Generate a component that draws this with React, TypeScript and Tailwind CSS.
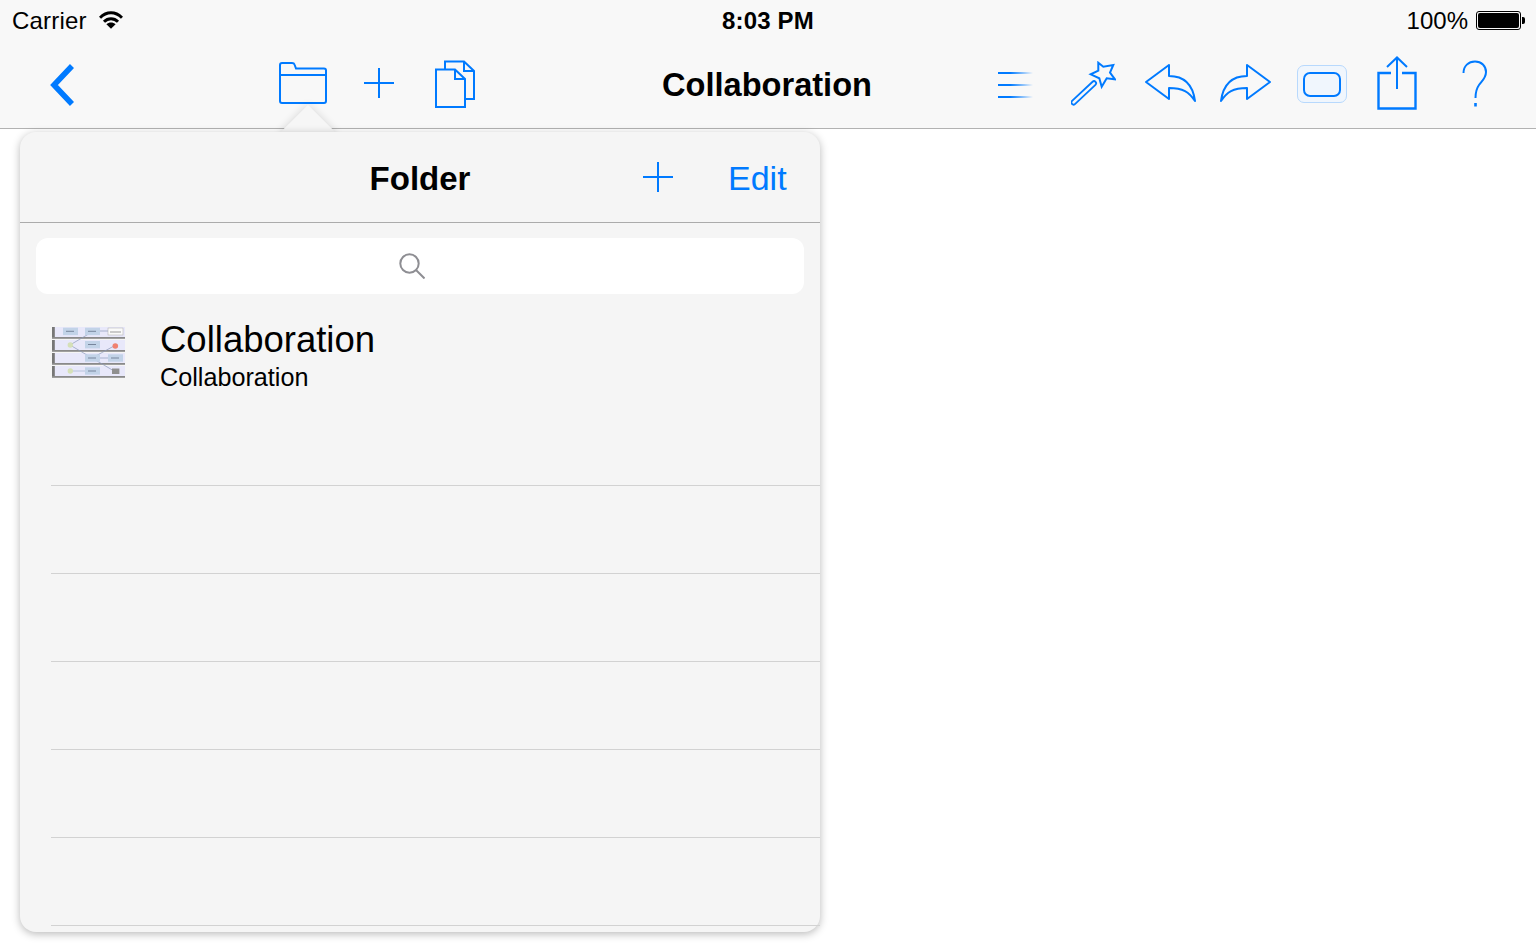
import React from 'react';

const BLUE = '#007aff';

function Line({ d, w = 2 }: { d: string; w?: number }) {
  return <path d={d} fill="none" stroke={BLUE} strokeWidth={w} />;
}

function Wifi() {
  return (
    <svg width="24" height="18" viewBox="0 0 24 18" className="ml-[12px] -mt-[2px]">
      <path d="M1 6.8C7.5 0.2 16.5 0.2 23 6.8" fill="none" stroke="#000" strokeWidth="3" />
      <path d="M5 10.8C9 6.8 15 6.8 19 10.8" fill="none" stroke="#000" strokeWidth="3" />
      <path d="M12 17.8L7.4 13.2C10 11 14 11 16.6 13.2Z" fill="#000" />
    </svg>
  );
}

function Battery() {
  return (
    <div className="ml-[8px] -mt-[2px] flex items-center">
      <div className="h-[19px] w-[45px] rounded-[3px] border border-black p-[1px]">
        <div className="h-full w-full rounded-[2px] bg-black" />
      </div>
      <div className="ml-[1px] h-[7px] w-[3px] rounded-r-[2px] bg-black" />
    </div>
  );
}

function Back() {
  return (
    <svg width="24" height="42" viewBox="0 0 24 42" className="ml-[50px] mt-[24px] shrink-0">
      <polyline points="22,2 4,21 22,40" fill="none" stroke={BLUE} strokeWidth="5.6" />
    </svg>
  );
}

function Folder() {
  return (
    <svg width="48" height="42" viewBox="0 0 48 42" className="ml-[205px] mt-[22px] shrink-0">
      <Line d="M1 13V3Q1 1 3 1H13Q15 1 15.5 2.5L17 6.5H45Q47 6.5 47 8.5V39Q47 41 45 41H3Q1 41 1 39Z" />
      <Line d="M1 13H47" />
    </svg>
  );
}

function Plus({ className }: { className: string }) {
  return (
    <svg width="30" height="30" viewBox="0 0 30 30" className={className}>
      <Line d="M0 15H30M15 0V30" />
    </svg>
  );
}

function Docs() {
  return (
    <svg width="40" height="48" viewBox="0 0 40 48" className="ml-[41px] mt-[20px] shrink-0">
      <Line d="M1 9.5H20L30 19V47H1Z" />
      <Line d="M20 9.5V19H30" />
      <Line d="M10 9V1.5H29L39 11V39H31" />
      <Line d="M29 1.5V11H39" />
    </svg>
  );
}

function Lines() {
  return (
    <svg width="35" height="26" viewBox="0 0 35 26" className="ml-[124px] mt-[32px] shrink-0">
      <defs>
        <linearGradient id="fade" x1="0" y1="0" x2="35" y2="0" gradientUnits="userSpaceOnUse">
          <stop offset="0.35" stopColor={BLUE} />
          <stop offset="1" stopColor={BLUE} stopOpacity="0" />
        </linearGradient>
      </defs>
      <rect x="0" y="0" width="35" height="2" fill="url(#fade)" />
      <rect x="0" y="12" width="35" height="2" fill="url(#fade)" />
      <rect x="0" y="24" width="35" height="2" fill="url(#fade)" />
    </svg>
  );
}

function Wand() {
  return (
    <svg width="45" height="45" viewBox="0 0 45 45" className="ml-[38px] mt-[21px] shrink-0">
      <path d="M27.3 1.7L32.3 5.7L42.3 4L39 11.7L44 18.3L35.7 17.3L30.7 25.7L28.3 17.3L19.7 13.3L27.3 9.7Z" fill="none" stroke={BLUE} strokeWidth="2" />
      <line x1="2.5" y1="41.5" x2="23" y2="22.3" stroke={BLUE} strokeWidth="6" strokeLinecap="round" />
      <line x1="2.5" y1="41.5" x2="23" y2="22.3" stroke="#f8f8f8" strokeWidth="2.4" strokeLinecap="round" />
    </svg>
  );
}

const ARROW = 'M1 18L24 1V12C40 12 48 22 50 37C44 28 38 24 24 24V35Z';

function Reply() {
  return (
    <svg width="51" height="38" viewBox="0 0 51 38" className="ml-[29px] mt-[24px] shrink-0">
      <path d={ARROW} fill="none" stroke={BLUE} strokeWidth="2" strokeLinejoin="round" />
    </svg>
  );
}

function Forward() {
  return (
    <svg width="51" height="38" viewBox="0 0 51 38" className="ml-[24px] mt-[24px] shrink-0">
      <path d={ARROW} transform="translate(51 0) scale(-1 1)" fill="none" stroke={BLUE} strokeWidth="2" strokeLinejoin="round" />
    </svg>
  );
}

function Frame() {
  return (
    <div className="ml-[26px] mt-[25px] flex h-[38px] w-[50px] shrink-0 items-center justify-center rounded-[7px] border border-[#b8d9fd] bg-[#f0f6fd]">
      <div className="h-[25px] w-[38px] rounded-[7px] border-2 border-[#007aff]" />
    </div>
  );
}

function Share() {
  return (
    <svg width="40" height="54" viewBox="0 0 40 54" className="ml-[30px] mt-[16px] shrink-0">
      <Line d="M14 17H1.5V52.5H38.5V17H25" w={2.4} />
      <Line d="M20 2V33" />
      <Line d="M10 11L20 1.5L30 11" />
    </svg>
  );
}

function Help() {
  return (
    <svg width="26" height="48" viewBox="0 0 26 48" className="ml-[44px] mt-[20px] shrink-0">
      <Line d="M2.5 13C2.5 6 7.5 1.5 14 1.5C20.5 1.5 25 6 25 12C25 18 21 21 18 25C15.5 28.5 14.5 31 14.5 38" />
      <rect x="13.2" y="43" width="2.6" height="3.5" fill={BLUE} />
    </svg>
  );
}

function Thumb() {
  const rows = [2, 15, 28, 41];
  return (
    <svg width="74" height="54" viewBox="0 0 74 54" className="ml-[32px] mt-[31px] shrink-0 blur-[0.6px]">
      {rows.map((y) => (
        <g key={y}>
          <rect x="0" y={y} width="73" height="10" fill="#e8e8fa" />
          <rect x="0" y={y + 10} width="73" height="1.8" fill="#8a8a8a" />
          <rect x="0" y={y} width="2.8" height="10" fill="#777" />
        </g>
      ))}
      <path d="M18 20L40 7M18 20L40 33M40 33L62 21M40 33L62 46M48 6H56M48 33H56" stroke="#8b98b8" strokeWidth="0.7" fill="none" />
      <path d="M18 46H33" stroke="#c5cde3" strokeWidth="1.4" fill="none" />
      {[[11, 2.7], [33, 2.7], [33, 16], [33, 29.3], [56, 29.3], [33, 42.3]].map(([x, y]) => (
        <rect key={`${x}-${y}`} x={x} y={y} width="15" height="7.4" fill="#c2d3e8" />
      ))}
      <rect x="36" y="5.8" width="8" height="1" fill="#77859c" />
      <rect x="14" y="5.8" width="8" height="1" fill="#77859c" />
      <rect x="36" y="19" width="8" height="1" fill="#77859c" />
      <rect x="36" y="32.5" width="8" height="1" fill="#77859c" />
      <rect x="59" y="32.5" width="8" height="1" fill="#77859c" />
      <rect x="36" y="45.5" width="8" height="1" fill="#77859c" />
      <rect x="56" y="3" width="15" height="7" fill="#fafafa" stroke="#aaa" strokeWidth="0.5" />
      <rect x="58" y="6.5" width="11" height="1" fill="#999" />
      <circle cx="18.3" cy="20" r="2.7" fill="#d5e0b8" />
      <circle cx="18.3" cy="46" r="2.7" fill="#d5e0b8" />
      <circle cx="63.3" cy="21" r="2.8" fill="#f08070" />
      <rect x="60" y="43.5" width="7.4" height="5.5" fill="#8f8f8f" />
    </svg>
  );
}

export default function App() {
  const sans = "font-['Liberation_Sans',Arial,sans-serif]";
  return (
    <div className={`relative h-[944px] w-[1536px] overflow-hidden bg-white text-black ${sans}`}>
      <header className="h-[129px] border-b border-[#b2b2b2] bg-[#f8f8f8]">
        <div className="grid h-[40px] grid-cols-[1fr_auto_1fr] items-center pt-[2px] text-[24px] leading-none">
          <div className="flex items-center pl-[12px]">
            <span className="tracking-[0.2px]">Carrier</span>
            <Wifi />
          </div>
          <span className="font-bold tracking-[0.15px]">8:03 PM</span>
          <div className="flex items-center justify-end pr-[11px]">
            <span>100%</span>
            <Battery />
          </div>
        </div>
        <div className="grid h-[88px] grid-cols-[1fr_auto_1fr]">
          <div className="flex items-start">
            <Back />
            <Folder />
            <Plus className="ml-[37px] mt-[28px] shrink-0" />
            <Docs />
          </div>
          <h1 className="mt-[26px] pr-[2px] text-[32.6px] font-bold leading-[38px]">Collaboration</h1>
          <div className="flex items-start">
            <Lines />
            <Wand />
            <Reply />
            <Forward />
            <Frame />
            <Share />
            <Help />
          </div>
        </div>
      </header>

      <div className="absolute left-[288px] top-[113px] h-[40px] w-[40px] rotate-45 bg-[#f6f6f6] shadow-[0_0_8px_rgba(0,0,0,0.14)]" />

      <aside className="absolute left-[20px] top-[132px] h-[800px] w-[800px] rounded-[16px] bg-[#f5f5f5] shadow-[0_2px_8px_rgba(0,0,0,0.28)]">
        <div className="relative h-[91px] border-b border-[#ababab]">
          <h2 className="pt-[28px] text-center text-[33px] font-bold leading-[38px]">Folder</h2>
          <Plus className="absolute left-[623px] top-[30px]" />
          <span className="absolute left-[708px] top-[27px] text-[34px] leading-[38px] text-[#007aff]">Edit</span>
        </div>
        <div className="mx-[16px] mt-[15px] flex h-[56px] items-center justify-center rounded-[12px] bg-white">
          <svg width="26" height="26" viewBox="0 0 26 26" className="mr-[16px] -mt-[1px]">
            <circle cx="10.5" cy="10.5" r="9.2" fill="none" stroke="#8e8e93" strokeWidth="2" />
            <path d="M17 17L25.5 25.5" stroke="#8e8e93" strokeWidth="2" />
          </svg>
        </div>
        <div className="flex h-[104px]">
          <Thumb />
          <div className="ml-[34px] pt-[25px]">
            <div className="text-[36.5px] leading-[42px]">Collaboration</div>
            <div className="mt-[2px] text-[25.2px] leading-[28px]">Collaboration</div>
          </div>
        </div>
        {[0, 1, 2, 3, 4, 5].map((i) => (
          <div key={i} className="ml-[31px] h-[88px] border-b border-[#d2d2d2]" />
        ))}
      </aside>
    </div>
  );
}
